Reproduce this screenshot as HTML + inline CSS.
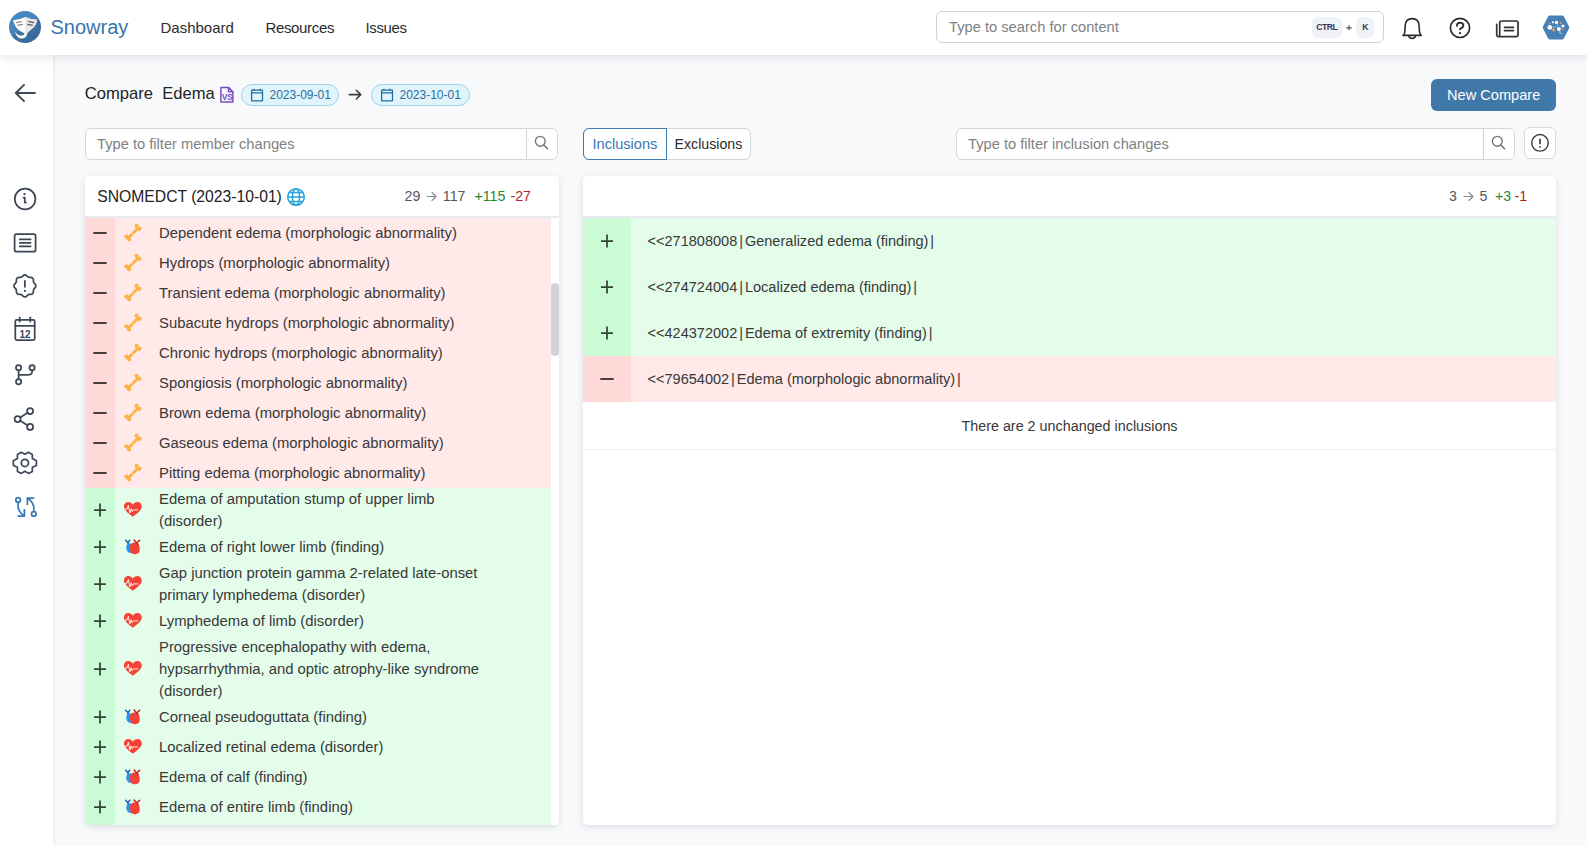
<!DOCTYPE html>
<html><head><meta charset="utf-8">
<style>
*{box-sizing:border-box;margin:0;padding:0}
html,body{width:1587px;height:846px;overflow:hidden}
body{background:#f8f9fb;font-family:"Liberation Sans",sans-serif;color:#333;position:relative}
.a{position:absolute;white-space:nowrap}
#hdr{position:absolute;left:0;top:0;width:1587px;height:55px;background:#fff;box-shadow:0 2px 9px rgba(30,40,60,.12);z-index:5}
#side{position:absolute;left:0;top:55px;width:53px;height:791px;background:#fff;box-shadow:1px 0 5px rgba(30,40,60,.07);z-index:4}
.nav{font-size:15px;color:#2b2b2b;line-height:15px;top:20px}
.card{position:absolute;background:#fff;border-radius:5px;box-shadow:0 2px 7px rgba(30,40,60,.13)}
.inp{position:absolute;background:#fff;border:1px solid #d5d6d8;border-radius:6px}
.ph{color:#7f8183;font-size:14.7px;line-height:15px}
svg{position:absolute;overflow:visible}
.ic{fill:none;stroke:#3d4756;stroke-width:1.75;stroke-linecap:round;stroke-linejoin:round}
.badge{position:absolute;top:84px;height:22px;border:1px solid #9ed3ea;background:#e2f4fb;border-radius:11px}
.bt{position:absolute;font-size:12px;line-height:12px;color:#2a6e9c;top:3.6px}
.row{position:absolute;left:0;width:466px;}
.rr{background:#ffe9e9}.rg{background:#e4fdea}
.cell{position:absolute;left:0;top:0;width:30px;height:100%}
.rr .cell{background:#ffd8d8}.rg .cell{background:#cbfcd5}
.txt{position:absolute;left:74px;font-size:14.85px;line-height:22px;color:#383838}
.cnt{position:absolute;top:13.1px;font-size:14.2px;line-height:14.2px;color:#555;white-space:nowrap}
.arr{fill:none;stroke:#8a8a8a;stroke-width:1.15;stroke-linecap:round;stroke-linejoin:round}
</style></head><body>

<!-- HEADER -->
<div id="hdr">
  <svg style="left:9px;top:11px" width="32" height="32" viewBox="0 0 32 32">
    <defs><linearGradient id="lg" x1="0.2" y1="0.1" x2="0.8" y2="0.9"><stop offset="0" stop-color="#4788c0"/><stop offset="0.45" stop-color="#4584ba"/><stop offset="0.55" stop-color="#3c71a0"/><stop offset="1" stop-color="#3a6b98"/></linearGradient></defs>
    <circle cx="16" cy="16" r="16" fill="url(#lg)"/>
    <path d="M4 9.3 Q10.5 9.0 16.3 6.1 Q22 8.8 28.2 8.8 Q27.2 15.2 21.5 19 Q18.5 21 17.9 23.2 Q17.5 27.4 12 27.5 Q8 27.2 6 21 Q8.8 24.6 12.2 24.8 Q15 24.8 15.6 22.3 Q9.2 19.8 6.6 15.5 Q4.8 12.5 4 9.3Z" fill="#fff"/>
    <path d="M16.3 6.1 Q22 8.8 28.2 8.8 Q27.2 15.2 21.5 19 Q18.5 21 17.9 23.2 Q17.8 25.3 16.3 26.3Z" fill="#e6e6e6"/>
    <path d="M6.9 11.6 L12.9 10.55 M8.4 14.4 L14 13.3" stroke="#8c8c8c" stroke-width="1.25" fill="none"/>
    <path d="M19.3 10.3 L25 11.6 M18.2 13.3 L23.7 14.4" stroke="#5e5e5e" stroke-width="1.25" fill="none"/>
  </svg>
  <div class="a" style="left:50.5px;top:16.5px;font-size:20px;line-height:20px;color:#3874ac">Snowray</div>
  <div class="a nav" style="left:160.5px">Dashboard</div>
  <div class="a nav" style="left:265.5px;letter-spacing:-.35px">Resources</div>
  <div class="a nav" style="left:365.5px;letter-spacing:-.35px">Issues</div>

  <div class="inp" style="left:936px;top:11px;width:448px;height:32px;border-color:#cfd3d9"></div>
  <div class="a ph" style="left:949px;top:19.6px">Type to search for content</div>
  <div class="a" style="left:1312px;top:17px;width:30px;height:20px;background:#eff2f6;border-radius:6px;box-shadow:0 1px 1px rgba(0,0,0,.06)"></div>
  <div class="a" style="left:1316.2px;top:21.65px;font-size:8.7px;line-height:10px;font-weight:bold;color:#3b3552;letter-spacing:-.55px">CTRL</div>
  <svg style="left:1346.2px;top:24.8px" width="6" height="6" viewBox="0 0 6 6"><path d="M3 0.2 V5.2 M0.1 2.9 H5.9" stroke="#3a3a3a" stroke-width="1"/></svg>
  <div class="a" style="left:1356px;top:17px;width:18px;height:20px;background:#eff2f6;border-radius:6px;box-shadow:0 1px 1px rgba(0,0,0,.06)"></div>
  <div class="a" style="left:1362.2px;top:21.65px;font-size:8.7px;line-height:10px;font-weight:bold;color:#3b3552">K</div>

  <!-- bell -->
  <svg style="left:1400px;top:15.8px" width="24" height="25" viewBox="0 0 24 25">
    <path d="M4.8 16 L5.2 9.5 Q5.6 2.6 12.15 2.6 Q18.7 2.6 19.1 9.5 L19.5 16 Q19.8 18.3 21.3 19.4 H3 Q4.5 18.3 4.8 16 Z" fill="none" stroke="#2b2b2b" stroke-width="1.6" stroke-linejoin="round"/>
    <path d="M8.7 19.7 Q9.1 22.5 12.15 22.5 Q15.2 22.5 15.6 19.7" fill="none" stroke="#2b2b2b" stroke-width="1.5"/>
  </svg>
  <!-- help -->
  <svg style="left:1448px;top:16px" width="24" height="24" viewBox="0 0 24 24">
    <circle cx="12" cy="11.9" r="9.6" fill="none" stroke="#2b2b2b" stroke-width="1.7"/>
    <path d="M8.8 9.9 Q8.9 6.7 12 6.6 Q15.3 6.6 15.4 9.3 Q15.4 11.5 12.8 12.3 Q12 12.6 12 13.4" fill="none" stroke="#2b2b2b" stroke-width="1.75" stroke-linecap="round"/>
    <circle cx="12" cy="17.2" r="1.1" fill="#2b2b2b"/>
  </svg>
  <!-- news -->
  <svg style="left:1494px;top:17.9px" width="27" height="22" viewBox="0 0 27 22">
    <path d="M2.7 6.3 V16.3 Q2.7 18.6 4.5 18.6 H22.2 Q24 18.6 24 16.8 V4.8 Q24 3 22.2 3 H7.5 Q5.7 3 5.7 4.8 V17" fill="none" stroke="#333" stroke-width="1.7" stroke-linecap="round"/>
    <path d="M10.5 9.3 H19.5 M10.5 12.6 H19.5" stroke="#333" stroke-width="1.7" stroke-linecap="round"/>
  </svg>
  <!-- avatar -->
  <svg style="left:1542px;top:14.5px" width="28" height="25" viewBox="0 0 28 25">
    <path d="M7.6 0.5 H20.4 Q21.3 0.5 21.8 1.3 L27 11.5 Q27.5 12.45 27 13.4 L21.8 23.6 Q21.3 24.4 20.4 24.4 H7.6 Q6.7 24.4 6.2 23.6 L1 13.4 Q0.5 12.45 1 11.5 L6.2 1.3 Q6.7 0.5 7.6 0.5Z" fill="#4680b5"/>
    <g fill="#fff">
    <circle cx="7.85" cy="12.4" r="2.3"/><circle cx="10.86" cy="7.35" r="1.05"/><circle cx="14.47" cy="7.4" r="1.7"/>
    <circle cx="20.9" cy="11" r="1.6"/><circle cx="16.9" cy="14" r="2.0"/><circle cx="17.9" cy="17" r="0.75"/><circle cx="19.2" cy="18.6" r="0.6"/>
    <circle cx="11.3" cy="12" r="0.6"/><circle cx="15.6" cy="10.4" r="0.5"/></g>
    <g fill="#f4a04e">
    <circle cx="11.66" cy="15" r="1.45"/><circle cx="7.85" cy="8.55" r="0.8"/><circle cx="18.7" cy="7.95" r="0.95"/>
    <circle cx="13.67" cy="11.8" r="0.8"/><circle cx="20.7" cy="14.2" r="0.8"/></g>
  </svg>
</div>

<!-- SIDEBAR -->
<div id="side"></div>
<svg style="left:0;top:0;z-index:6" width="53" height="846" viewBox="0 0 53 846">
  <g class="ic">
    <!-- back arrow -->
    <path d="M15.8 93 H35 M15.8 93 L24 84.8 M15.8 93 L24 101.2" stroke-width="1.9"/>
    <!-- info -->
    <circle cx="25.1" cy="199" r="10.3"/>
    <path d="M24.4 194.1 h.1" stroke-width="2.2"/>
    <path d="M23.5 197.5 h1.3 v5 h1.1"/>
    <!-- article -->
    <rect x="14.6" y="234.2" width="21" height="17.5" rx="2"/>
    <path d="M19.7 239.4 H30.7 M19.7 242.9 H30.7 M19.7 246.4 H30.7" stroke-width="1.6"/>
    <!-- rosette alert -->
    <g transform="translate(24.89 285.9) scale(1.215) translate(-12 -12)" stroke-width="1.45"><path d="M5 7.2a2.2 2.2 0 0 1 2.2 -2.2h1a2.2 2.2 0 0 0 1.55 -.64l.7 -.7a2.2 2.2 0 0 1 3.12 0l.7 .7c.412 .41 .97 .64 1.55 .64h1a2.2 2.2 0 0 1 2.2 2.2v1c0 .58 .23 1.138 .64 1.55l.7 .7a2.2 2.2 0 0 1 0 3.12l-.7 .7a2.2 2.2 0 0 0 -.64 1.55v1a2.2 2.2 0 0 1 -2.2 2.2h-1a2.2 2.2 0 0 0 -1.55 .64l-.7 .7a2.2 2.2 0 0 1 -3.12 0l-.7 -.7a2.2 2.2 0 0 0 -1.55 -.64h-1a2.2 2.2 0 0 1 -2.2 -2.2v-1a2.2 2.2 0 0 0 -.64 -1.55l-.7 -.7a2.2 2.2 0 0 1 0 -3.12l.7 -.7a2.2 2.2 0 0 0 .64 -1.55v-1"/></g>
    <path d="M24.89 281 V286.8" stroke-width="1.8"/>
    <path d="M24.89 290.8 v.1" stroke-width="2.1"/>
    <!-- calendar -->
    <rect x="15.3" y="319.8" width="19.4" height="20.4" rx="1.6"/>
    <path d="M15.3 325.9 H34.7 M19.7 317.3 V321.5 M30.3 317.3 V321.5"/>
    <!-- git branch -->
    <circle cx="18.6" cy="367.8" r="2.6"/><circle cx="32.1" cy="367.8" r="2.6"/><circle cx="18.6" cy="381.8" r="2.6"/>
    <path d="M18.6 370.4 V379.2 M18.6 374.8 H28.6 Q32.1 374.8 32.1 371.3 V370.4"/>
    <!-- share -->
    <circle cx="17.6" cy="419.1" r="3"/><circle cx="30.1" cy="411.1" r="3"/><circle cx="30.1" cy="426.9" r="3"/>
    <path d="M20.2 417.4 L27.5 412.8 M20.2 420.8 L27.5 425.2"/>
    <!-- settings gear -->
    <path d="M21.35 452.3 L24.89 454.2 L28.44 452.3 L32.34 454.6 L32.34 458.6 L36.42 460.8 L36.42 465.4 L32.34 467.3 L32.34 471.4 L28.44 473.4 L24.89 471.2 L21.35 473.4 L17.45 471.4 L17.45 467.3 L13.37 465.4 L13.37 460.8 L17.45 458.6 L17.45 454.6 Z" stroke-width="1.7"/>
    <circle cx="24.89" cy="462.9" r="3.6"/>
  </g>
  <g class="ic" style="stroke:#3a7ab6">
    <circle cx="18.1" cy="500" r="2.3"/>
    <path d="M18.1 502.3 V506.5 Q18.1 511.5 24.2 515.9"/>
    <path d="M18.2 516 H24.4 V509.9"/>
    <circle cx="33.8" cy="513.9" r="2.3"/>
    <path d="M33.8 511.6 V507.5 Q33.8 502.5 27.6 498.2"/>
    <path d="M33.6 498.1 H27.4 V504.2"/>
  </g>
  <text x="25" y="337.6" text-anchor="middle" font-family="Liberation Sans" font-weight="bold" font-size="10" fill="#3d4756">12</text>
</svg>

<!-- MAIN TITLE -->
<div class="a" style="left:84.8px;top:86.4px;font-size:16.6px;line-height:16.6px;color:#232323">Compare&nbsp; Edema</div>
<svg style="left:219px;top:86px" width="16" height="18" viewBox="0 0 16 18">
  <path d="M1.9 1.4 H9.5 L13.9 5.8 V16 H1.9 Z M9.5 1.4 V5.8 H13.9" fill="none" stroke="#7c4cc6" stroke-width="1.5" stroke-linejoin="round"/>
  <text x="7.9" y="14" text-anchor="middle" font-family="Liberation Sans" font-weight="bold" font-size="8.6" letter-spacing="-0.6" fill="#7c4cc6">VS</text>
</svg>
<div class="badge" style="left:241px;width:98px">
  <svg style="left:9px;top:3.5px" width="13" height="13" viewBox="0 0 13 13"><rect x="0.6" y="1.1" width="10.9" height="10.7" rx="0.3" fill="none" stroke="#1d6ea3" stroke-width="1.25"/><path d="M0.6 3.8 H11.5 M2.9 -0.2 V1.8 M9.1 -0.2 V1.8" stroke="#1d6ea3" stroke-width="1.25"/></svg>
  <div class="bt" style="left:27.5px">2023-09-01</div>
</div>
<svg style="left:347px;top:87px" width="16" height="14" viewBox="0 0 16 14"><path d="M2.3 7.6 H13.6 M9.3 3.2 L13.7 7.6 L9.3 12" fill="none" stroke="#3a3a3a" stroke-width="1.55" stroke-linecap="round" stroke-linejoin="round"/></svg>
<div class="badge" style="left:371px;width:99px">
  <svg style="left:9px;top:3.5px" width="13" height="13" viewBox="0 0 13 13"><rect x="0.6" y="1.1" width="10.9" height="10.7" rx="0.3" fill="none" stroke="#1d6ea3" stroke-width="1.25"/><path d="M0.6 3.8 H11.5 M2.9 -0.2 V1.8 M9.1 -0.2 V1.8" stroke="#1d6ea3" stroke-width="1.25"/></svg>
  <div class="bt" style="left:27.5px">2023-10-01</div>
</div>

<div class="a" style="left:1431px;top:79px;width:125px;height:32px;background:#4178aa;border-radius:6px"></div>
<div class="a" style="left:1447px;top:87.5px;font-size:14.6px;line-height:14.6px;color:#fff">New Compare</div>

<!-- LEFT FILTER -->
<div class="inp" style="left:85px;top:128px;width:473px;height:32px"></div>
<div class="a" style="left:526px;top:129px;width:1px;height:30px;background:#d3d5d8"></div>
<div class="a ph" style="left:97px;top:137.2px">Type to filter member changes</div>
<svg style="left:533px;top:134px" width="16" height="16" viewBox="0 0 16 16"><circle cx="7.3" cy="7.3" r="4.9" fill="none" stroke="#737373" stroke-width="1.35"/><path d="M10.8 10.9 L14.6 14.8" stroke="#737373" stroke-width="1.45" stroke-linecap="round"/></svg>

<!-- TABS -->
<div class="a" style="left:583px;top:128px;width:168px;height:32px;background:#fff;border:1px solid #d5d6d8;border-radius:6px"></div>
<div class="a" style="left:583px;top:128px;width:84px;height:32px;border:1.5px solid #3f79ad;border-radius:6px 0 0 6px"></div>
<div class="a" style="left:592.5px;top:136.7px;font-size:14.6px;line-height:14.6px;color:#3a78b0">Inclusions</div>
<div class="a" style="left:674.5px;top:136.7px;font-size:14.2px;line-height:14.6px;color:#2b2b2b">Exclusions</div>

<!-- RIGHT FILTER -->
<div class="inp" style="left:956px;top:128px;width:559px;height:32px"></div>
<div class="a" style="left:1483px;top:129px;width:1px;height:30px;background:#d3d5d8"></div>
<div class="a ph" style="left:968px;top:137.2px">Type to filter inclusion changes</div>
<svg style="left:1490px;top:134px" width="16" height="16" viewBox="0 0 16 16"><circle cx="7.3" cy="7.3" r="4.9" fill="none" stroke="#737373" stroke-width="1.35"/><path d="M10.8 10.9 L14.6 14.8" stroke="#737373" stroke-width="1.45" stroke-linecap="round"/></svg>
<div class="inp" style="left:1524px;top:127px;width:32px;height:32px;border-color:#d6d9de"></div>
<svg style="left:1530px;top:133px" width="20" height="20" viewBox="0 0 20 20"><circle cx="10" cy="9.8" r="8.3" fill="none" stroke="#404040" stroke-width="1.45"/><path d="M10 6.3 V10.4" stroke="#404040" stroke-width="1.7" stroke-linecap="round"/><circle cx="10" cy="13.9" r="0.95" fill="#404040"/></svg>

<!-- LEFT CARD -->
<div class="card" style="left:85px;top:176px;width:474px;height:649px;overflow:hidden">
  <div class="a" style="left:12.3px;top:12.6px;font-size:15.7px;line-height:15.7px;color:#222">SNOMEDCT (2023-10-01)</div>
  <svg style="left:201px;top:11px" width="20" height="20" viewBox="0 0 20 20"><g fill="none" stroke="#27a3dc" stroke-width="1.5"><circle cx="10" cy="10" r="8.3"/><ellipse cx="10" cy="10" rx="3.6" ry="8.3"/><path d="M1.7 10 H18.3 M3 5.6 H17 M3 14.4 H17"/></g></svg>
  <div class="cnt" style="left:319.5px">29</div><svg style="left:341px;top:14.5px" width="11" height="11" viewBox="0 0 11 11"><path d="M1 5.5 H10 M6 1.5 L10 5.5 L6 9.5" class="arr"/></svg><div class="cnt" style="left:357.8px">117</div><div class="cnt" style="left:389.5px;color:#23882b">+115</div><div class="cnt" style="left:425.5px;color:#b0241c">-27</div>
  <div class="a" style="left:0;top:40px;width:474px;height:2px;background:#e8eaee"></div>
  <div id="list" class="a" style="left:0;top:42px;width:466px;height:607px;overflow:hidden">
<div class="row rr" style="top:0px;height:30px"><div class="cell"></div><svg style="left:8px;top:13.0px" width="14" height="4" viewBox="0 0 14 4"><path d="M1 2 H13" stroke="#4a4040" stroke-width="1.8" stroke-linecap="round"/></svg><svg style="left:38px;top:5.0px" width="20" height="20" viewBox="0 0 20 20"><g fill="#ffb245"><path d="M3.9 14.2 L14.2 3.9 L16.3 6 L6 16.3Z"/><circle cx="3.4" cy="13.6" r="2.15"/><circle cx="6.05" cy="16.3" r="2.15"/><circle cx="13.6" cy="2.9" r="2.15"/><circle cx="16.45" cy="5.85" r="2.15"/></g><path d="M8.6 9.4 L10.9 11.7" stroke="#ffe9e9" stroke-width="0.6"/></svg><div class="txt" style="top:4px">Dependent edema (morphologic abnormality)</div></div>
<div class="row rr" style="top:30px;height:30px"><div class="cell"></div><svg style="left:8px;top:13.0px" width="14" height="4" viewBox="0 0 14 4"><path d="M1 2 H13" stroke="#4a4040" stroke-width="1.8" stroke-linecap="round"/></svg><svg style="left:38px;top:5.0px" width="20" height="20" viewBox="0 0 20 20"><g fill="#ffb245"><path d="M3.9 14.2 L14.2 3.9 L16.3 6 L6 16.3Z"/><circle cx="3.4" cy="13.6" r="2.15"/><circle cx="6.05" cy="16.3" r="2.15"/><circle cx="13.6" cy="2.9" r="2.15"/><circle cx="16.45" cy="5.85" r="2.15"/></g><path d="M8.6 9.4 L10.9 11.7" stroke="#ffe9e9" stroke-width="0.6"/></svg><div class="txt" style="top:4px">Hydrops (morphologic abnormality)</div></div>
<div class="row rr" style="top:60px;height:30px"><div class="cell"></div><svg style="left:8px;top:13.0px" width="14" height="4" viewBox="0 0 14 4"><path d="M1 2 H13" stroke="#4a4040" stroke-width="1.8" stroke-linecap="round"/></svg><svg style="left:38px;top:5.0px" width="20" height="20" viewBox="0 0 20 20"><g fill="#ffb245"><path d="M3.9 14.2 L14.2 3.9 L16.3 6 L6 16.3Z"/><circle cx="3.4" cy="13.6" r="2.15"/><circle cx="6.05" cy="16.3" r="2.15"/><circle cx="13.6" cy="2.9" r="2.15"/><circle cx="16.45" cy="5.85" r="2.15"/></g><path d="M8.6 9.4 L10.9 11.7" stroke="#ffe9e9" stroke-width="0.6"/></svg><div class="txt" style="top:4px">Transient edema (morphologic abnormality)</div></div>
<div class="row rr" style="top:90px;height:30px"><div class="cell"></div><svg style="left:8px;top:13.0px" width="14" height="4" viewBox="0 0 14 4"><path d="M1 2 H13" stroke="#4a4040" stroke-width="1.8" stroke-linecap="round"/></svg><svg style="left:38px;top:5.0px" width="20" height="20" viewBox="0 0 20 20"><g fill="#ffb245"><path d="M3.9 14.2 L14.2 3.9 L16.3 6 L6 16.3Z"/><circle cx="3.4" cy="13.6" r="2.15"/><circle cx="6.05" cy="16.3" r="2.15"/><circle cx="13.6" cy="2.9" r="2.15"/><circle cx="16.45" cy="5.85" r="2.15"/></g><path d="M8.6 9.4 L10.9 11.7" stroke="#ffe9e9" stroke-width="0.6"/></svg><div class="txt" style="top:4px">Subacute hydrops (morphologic abnormality)</div></div>
<div class="row rr" style="top:120px;height:30px"><div class="cell"></div><svg style="left:8px;top:13.0px" width="14" height="4" viewBox="0 0 14 4"><path d="M1 2 H13" stroke="#4a4040" stroke-width="1.8" stroke-linecap="round"/></svg><svg style="left:38px;top:5.0px" width="20" height="20" viewBox="0 0 20 20"><g fill="#ffb245"><path d="M3.9 14.2 L14.2 3.9 L16.3 6 L6 16.3Z"/><circle cx="3.4" cy="13.6" r="2.15"/><circle cx="6.05" cy="16.3" r="2.15"/><circle cx="13.6" cy="2.9" r="2.15"/><circle cx="16.45" cy="5.85" r="2.15"/></g><path d="M8.6 9.4 L10.9 11.7" stroke="#ffe9e9" stroke-width="0.6"/></svg><div class="txt" style="top:4px">Chronic hydrops (morphologic abnormality)</div></div>
<div class="row rr" style="top:150px;height:30px"><div class="cell"></div><svg style="left:8px;top:13.0px" width="14" height="4" viewBox="0 0 14 4"><path d="M1 2 H13" stroke="#4a4040" stroke-width="1.8" stroke-linecap="round"/></svg><svg style="left:38px;top:5.0px" width="20" height="20" viewBox="0 0 20 20"><g fill="#ffb245"><path d="M3.9 14.2 L14.2 3.9 L16.3 6 L6 16.3Z"/><circle cx="3.4" cy="13.6" r="2.15"/><circle cx="6.05" cy="16.3" r="2.15"/><circle cx="13.6" cy="2.9" r="2.15"/><circle cx="16.45" cy="5.85" r="2.15"/></g><path d="M8.6 9.4 L10.9 11.7" stroke="#ffe9e9" stroke-width="0.6"/></svg><div class="txt" style="top:4px">Spongiosis (morphologic abnormality)</div></div>
<div class="row rr" style="top:180px;height:30px"><div class="cell"></div><svg style="left:8px;top:13.0px" width="14" height="4" viewBox="0 0 14 4"><path d="M1 2 H13" stroke="#4a4040" stroke-width="1.8" stroke-linecap="round"/></svg><svg style="left:38px;top:5.0px" width="20" height="20" viewBox="0 0 20 20"><g fill="#ffb245"><path d="M3.9 14.2 L14.2 3.9 L16.3 6 L6 16.3Z"/><circle cx="3.4" cy="13.6" r="2.15"/><circle cx="6.05" cy="16.3" r="2.15"/><circle cx="13.6" cy="2.9" r="2.15"/><circle cx="16.45" cy="5.85" r="2.15"/></g><path d="M8.6 9.4 L10.9 11.7" stroke="#ffe9e9" stroke-width="0.6"/></svg><div class="txt" style="top:4px">Brown edema (morphologic abnormality)</div></div>
<div class="row rr" style="top:210px;height:30px"><div class="cell"></div><svg style="left:8px;top:13.0px" width="14" height="4" viewBox="0 0 14 4"><path d="M1 2 H13" stroke="#4a4040" stroke-width="1.8" stroke-linecap="round"/></svg><svg style="left:38px;top:5.0px" width="20" height="20" viewBox="0 0 20 20"><g fill="#ffb245"><path d="M3.9 14.2 L14.2 3.9 L16.3 6 L6 16.3Z"/><circle cx="3.4" cy="13.6" r="2.15"/><circle cx="6.05" cy="16.3" r="2.15"/><circle cx="13.6" cy="2.9" r="2.15"/><circle cx="16.45" cy="5.85" r="2.15"/></g><path d="M8.6 9.4 L10.9 11.7" stroke="#ffe9e9" stroke-width="0.6"/></svg><div class="txt" style="top:4px">Gaseous edema (morphologic abnormality)</div></div>
<div class="row rr" style="top:240px;height:30px"><div class="cell"></div><svg style="left:8px;top:13.0px" width="14" height="4" viewBox="0 0 14 4"><path d="M1 2 H13" stroke="#4a4040" stroke-width="1.8" stroke-linecap="round"/></svg><svg style="left:38px;top:5.0px" width="20" height="20" viewBox="0 0 20 20"><g fill="#ffb245"><path d="M3.9 14.2 L14.2 3.9 L16.3 6 L6 16.3Z"/><circle cx="3.4" cy="13.6" r="2.15"/><circle cx="6.05" cy="16.3" r="2.15"/><circle cx="13.6" cy="2.9" r="2.15"/><circle cx="16.45" cy="5.85" r="2.15"/></g><path d="M8.6 9.4 L10.9 11.7" stroke="#ffe9e9" stroke-width="0.6"/></svg><div class="txt" style="top:4px">Pitting edema (morphologic abnormality)</div></div>
<div class="row rg" style="top:270px;height:44px"><div class="cell"></div><svg style="left:8px;top:15.0px" width="14" height="14" viewBox="0 0 14 14"><path d="M7 0.4 V13.6 M1 7 H13" stroke="#36433a" stroke-width="1.75"/></svg><svg style="left:38px;top:14.0px" width="20" height="17" viewBox="0 0 20 17"><path d="M9.85 14.8 C7 12.5 0.9 8.5 0.9 4.6 C0.9 2 2.8 0.1 5.2 0.1 C7.2 0.1 8.8 1.2 9.85 2.8 C10.9 1.2 12.5 0.1 14.5 0.1 C16.9 0.1 18.8 2 18.8 4.6 C18.8 8.5 12.7 12.5 9.85 14.8Z" fill="#f44336"/><path d="M2.3 7.2 H4 L5.4 3.4 L6.8 11 L8.2 6.8 L9.2 9.7 L10.2 7.9 H14.7" fill="none" stroke="#fff" stroke-width="0.9" stroke-linejoin="round" stroke-linecap="round"/></svg><div class="txt" style="top:0px">Edema of amputation stump of upper limb<br>(disorder)</div></div>
<div class="row rg" style="top:314px;height:30px"><div class="cell"></div><svg style="left:8px;top:8.0px" width="14" height="14" viewBox="0 0 14 14"><path d="M7 0.4 V13.6 M1 7 H13" stroke="#36433a" stroke-width="1.75"/></svg><svg style="left:38px;top:6.0px" width="18" height="18" viewBox="0 0 18 18"><path d="M5.2 5.2 Q3.2 6.5 3.2 9.5 Q3.3 13.5 6.8 15 L8.5 15 L8.8 6 Q7 5 5.2 5.2Z" fill="#2196f3"/><path d="M2.6 2.3 L4.9 4.6 L6.8 2.2 M4.9 4.6 L5.1 5.8" fill="none" stroke="#1565c0" stroke-width="1.5" stroke-linecap="round"/><path d="M8.8 5.2 Q10 4.3 11.6 4.4 Q14.5 4.6 15.9 7 Q17 9 16.8 12 Q16.6 15.8 12.5 16.3 Q9.3 16.4 8 14.4 Q6.7 12.4 6.8 9.8 Q6.9 6.6 8.8 5.2Z" fill="#f44336"/><path d="M11.1 2.1 L13.2 4.6 M16.6 2.4 L13.6 5 L15 6.4" fill="none" stroke="#c62828" stroke-width="1.6" stroke-linecap="round" stroke-linejoin="round"/><path d="M9.6 6.2 Q11.5 8.5 13.5 8.8" fill="none" stroke="#d83a30" stroke-width="0.6"/></svg><div class="txt" style="top:4px">Edema of right lower limb (finding)</div></div>
<div class="row rg" style="top:344px;height:44px"><div class="cell"></div><svg style="left:8px;top:15.0px" width="14" height="14" viewBox="0 0 14 14"><path d="M7 0.4 V13.6 M1 7 H13" stroke="#36433a" stroke-width="1.75"/></svg><svg style="left:38px;top:14.0px" width="20" height="17" viewBox="0 0 20 17"><path d="M9.85 14.8 C7 12.5 0.9 8.5 0.9 4.6 C0.9 2 2.8 0.1 5.2 0.1 C7.2 0.1 8.8 1.2 9.85 2.8 C10.9 1.2 12.5 0.1 14.5 0.1 C16.9 0.1 18.8 2 18.8 4.6 C18.8 8.5 12.7 12.5 9.85 14.8Z" fill="#f44336"/><path d="M2.3 7.2 H4 L5.4 3.4 L6.8 11 L8.2 6.8 L9.2 9.7 L10.2 7.9 H14.7" fill="none" stroke="#fff" stroke-width="0.9" stroke-linejoin="round" stroke-linecap="round"/></svg><div class="txt" style="top:0px">Gap junction protein gamma 2-related late-onset<br>primary lymphedema (disorder)</div></div>
<div class="row rg" style="top:388px;height:30px"><div class="cell"></div><svg style="left:8px;top:8.0px" width="14" height="14" viewBox="0 0 14 14"><path d="M7 0.4 V13.6 M1 7 H13" stroke="#36433a" stroke-width="1.75"/></svg><svg style="left:38px;top:7.0px" width="20" height="17" viewBox="0 0 20 17"><path d="M9.85 14.8 C7 12.5 0.9 8.5 0.9 4.6 C0.9 2 2.8 0.1 5.2 0.1 C7.2 0.1 8.8 1.2 9.85 2.8 C10.9 1.2 12.5 0.1 14.5 0.1 C16.9 0.1 18.8 2 18.8 4.6 C18.8 8.5 12.7 12.5 9.85 14.8Z" fill="#f44336"/><path d="M2.3 7.2 H4 L5.4 3.4 L6.8 11 L8.2 6.8 L9.2 9.7 L10.2 7.9 H14.7" fill="none" stroke="#fff" stroke-width="0.9" stroke-linejoin="round" stroke-linecap="round"/></svg><div class="txt" style="top:4px">Lymphedema of limb (disorder)</div></div>
<div class="row rg" style="top:418px;height:66px"><div class="cell"></div><svg style="left:8px;top:26.0px" width="14" height="14" viewBox="0 0 14 14"><path d="M7 0.4 V13.6 M1 7 H13" stroke="#36433a" stroke-width="1.75"/></svg><svg style="left:38px;top:25.0px" width="20" height="17" viewBox="0 0 20 17"><path d="M9.85 14.8 C7 12.5 0.9 8.5 0.9 4.6 C0.9 2 2.8 0.1 5.2 0.1 C7.2 0.1 8.8 1.2 9.85 2.8 C10.9 1.2 12.5 0.1 14.5 0.1 C16.9 0.1 18.8 2 18.8 4.6 C18.8 8.5 12.7 12.5 9.85 14.8Z" fill="#f44336"/><path d="M2.3 7.2 H4 L5.4 3.4 L6.8 11 L8.2 6.8 L9.2 9.7 L10.2 7.9 H14.7" fill="none" stroke="#fff" stroke-width="0.9" stroke-linejoin="round" stroke-linecap="round"/></svg><div class="txt" style="top:0px">Progressive encephalopathy with edema,<br>hypsarrhythmia, and optic atrophy-like syndrome<br>(disorder)</div></div>
<div class="row rg" style="top:484px;height:30px"><div class="cell"></div><svg style="left:8px;top:8.0px" width="14" height="14" viewBox="0 0 14 14"><path d="M7 0.4 V13.6 M1 7 H13" stroke="#36433a" stroke-width="1.75"/></svg><svg style="left:38px;top:6.0px" width="18" height="18" viewBox="0 0 18 18"><path d="M5.2 5.2 Q3.2 6.5 3.2 9.5 Q3.3 13.5 6.8 15 L8.5 15 L8.8 6 Q7 5 5.2 5.2Z" fill="#2196f3"/><path d="M2.6 2.3 L4.9 4.6 L6.8 2.2 M4.9 4.6 L5.1 5.8" fill="none" stroke="#1565c0" stroke-width="1.5" stroke-linecap="round"/><path d="M8.8 5.2 Q10 4.3 11.6 4.4 Q14.5 4.6 15.9 7 Q17 9 16.8 12 Q16.6 15.8 12.5 16.3 Q9.3 16.4 8 14.4 Q6.7 12.4 6.8 9.8 Q6.9 6.6 8.8 5.2Z" fill="#f44336"/><path d="M11.1 2.1 L13.2 4.6 M16.6 2.4 L13.6 5 L15 6.4" fill="none" stroke="#c62828" stroke-width="1.6" stroke-linecap="round" stroke-linejoin="round"/><path d="M9.6 6.2 Q11.5 8.5 13.5 8.8" fill="none" stroke="#d83a30" stroke-width="0.6"/></svg><div class="txt" style="top:4px">Corneal pseudoguttata (finding)</div></div>
<div class="row rg" style="top:514px;height:30px"><div class="cell"></div><svg style="left:8px;top:8.0px" width="14" height="14" viewBox="0 0 14 14"><path d="M7 0.4 V13.6 M1 7 H13" stroke="#36433a" stroke-width="1.75"/></svg><svg style="left:38px;top:7.0px" width="20" height="17" viewBox="0 0 20 17"><path d="M9.85 14.8 C7 12.5 0.9 8.5 0.9 4.6 C0.9 2 2.8 0.1 5.2 0.1 C7.2 0.1 8.8 1.2 9.85 2.8 C10.9 1.2 12.5 0.1 14.5 0.1 C16.9 0.1 18.8 2 18.8 4.6 C18.8 8.5 12.7 12.5 9.85 14.8Z" fill="#f44336"/><path d="M2.3 7.2 H4 L5.4 3.4 L6.8 11 L8.2 6.8 L9.2 9.7 L10.2 7.9 H14.7" fill="none" stroke="#fff" stroke-width="0.9" stroke-linejoin="round" stroke-linecap="round"/></svg><div class="txt" style="top:4px">Localized retinal edema (disorder)</div></div>
<div class="row rg" style="top:544px;height:30px"><div class="cell"></div><svg style="left:8px;top:8.0px" width="14" height="14" viewBox="0 0 14 14"><path d="M7 0.4 V13.6 M1 7 H13" stroke="#36433a" stroke-width="1.75"/></svg><svg style="left:38px;top:6.0px" width="18" height="18" viewBox="0 0 18 18"><path d="M5.2 5.2 Q3.2 6.5 3.2 9.5 Q3.3 13.5 6.8 15 L8.5 15 L8.8 6 Q7 5 5.2 5.2Z" fill="#2196f3"/><path d="M2.6 2.3 L4.9 4.6 L6.8 2.2 M4.9 4.6 L5.1 5.8" fill="none" stroke="#1565c0" stroke-width="1.5" stroke-linecap="round"/><path d="M8.8 5.2 Q10 4.3 11.6 4.4 Q14.5 4.6 15.9 7 Q17 9 16.8 12 Q16.6 15.8 12.5 16.3 Q9.3 16.4 8 14.4 Q6.7 12.4 6.8 9.8 Q6.9 6.6 8.8 5.2Z" fill="#f44336"/><path d="M11.1 2.1 L13.2 4.6 M16.6 2.4 L13.6 5 L15 6.4" fill="none" stroke="#c62828" stroke-width="1.6" stroke-linecap="round" stroke-linejoin="round"/><path d="M9.6 6.2 Q11.5 8.5 13.5 8.8" fill="none" stroke="#d83a30" stroke-width="0.6"/></svg><div class="txt" style="top:4px">Edema of calf (finding)</div></div>
<div class="row rg" style="top:574px;height:30px"><div class="cell"></div><svg style="left:8px;top:8.0px" width="14" height="14" viewBox="0 0 14 14"><path d="M7 0.4 V13.6 M1 7 H13" stroke="#36433a" stroke-width="1.75"/></svg><svg style="left:38px;top:6.0px" width="18" height="18" viewBox="0 0 18 18"><path d="M5.2 5.2 Q3.2 6.5 3.2 9.5 Q3.3 13.5 6.8 15 L8.5 15 L8.8 6 Q7 5 5.2 5.2Z" fill="#2196f3"/><path d="M2.6 2.3 L4.9 4.6 L6.8 2.2 M4.9 4.6 L5.1 5.8" fill="none" stroke="#1565c0" stroke-width="1.5" stroke-linecap="round"/><path d="M8.8 5.2 Q10 4.3 11.6 4.4 Q14.5 4.6 15.9 7 Q17 9 16.8 12 Q16.6 15.8 12.5 16.3 Q9.3 16.4 8 14.4 Q6.7 12.4 6.8 9.8 Q6.9 6.6 8.8 5.2Z" fill="#f44336"/><path d="M11.1 2.1 L13.2 4.6 M16.6 2.4 L13.6 5 L15 6.4" fill="none" stroke="#c62828" stroke-width="1.6" stroke-linecap="round" stroke-linejoin="round"/><path d="M9.6 6.2 Q11.5 8.5 13.5 8.8" fill="none" stroke="#d83a30" stroke-width="0.6"/></svg><div class="txt" style="top:4px">Edema of entire limb (finding)</div></div>
<div class="row rg" style="top:604px;height:30px"><div class="cell"></div><svg style="left:8px;top:8.0px" width="14" height="14" viewBox="0 0 14 14"><path d="M7 0.4 V13.6 M1 7 H13" stroke="#36433a" stroke-width="1.75"/></svg><svg style="left:38px;top:6.0px" width="18" height="18" viewBox="0 0 18 18"><path d="M5.2 5.2 Q3.2 6.5 3.2 9.5 Q3.3 13.5 6.8 15 L8.5 15 L8.8 6 Q7 5 5.2 5.2Z" fill="#2196f3"/><path d="M2.6 2.3 L4.9 4.6 L6.8 2.2 M4.9 4.6 L5.1 5.8" fill="none" stroke="#1565c0" stroke-width="1.5" stroke-linecap="round"/><path d="M8.8 5.2 Q10 4.3 11.6 4.4 Q14.5 4.6 15.9 7 Q17 9 16.8 12 Q16.6 15.8 12.5 16.3 Q9.3 16.4 8 14.4 Q6.7 12.4 6.8 9.8 Q6.9 6.6 8.8 5.2Z" fill="#f44336"/><path d="M11.1 2.1 L13.2 4.6 M16.6 2.4 L13.6 5 L15 6.4" fill="none" stroke="#c62828" stroke-width="1.6" stroke-linecap="round" stroke-linejoin="round"/><path d="M9.6 6.2 Q11.5 8.5 13.5 8.8" fill="none" stroke="#d83a30" stroke-width="0.6"/></svg><div class="txt" style="top:4px">Edema of foot (finding)</div></div>
</div>
  <div class="a" style="left:466px;top:42px;width:8px;height:607px;background:#fff"></div>
  <div class="a" style="left:466px;top:107px;width:7.5px;height:73px;background:#cfd3da;border-radius:4px"></div>
</div>

<!-- RIGHT CARD -->
<div class="card" style="left:583px;top:176px;width:973px;height:649px;overflow:hidden">
  <div class="cnt" style="left:866px">3</div><svg style="left:879.5px;top:14.5px" width="11" height="11" viewBox="0 0 11 11"><path d="M1 5.5 H10 M6 1.5 L10 5.5 L6 9.5" class="arr"/></svg><div class="cnt" style="left:896.5px">5</div><div class="cnt" style="left:912px;color:#23882b">+3</div><div class="cnt" style="left:931.5px;color:#b0241c">-1</div>
  <div class="a" style="left:0;top:40px;width:973px;height:2px;background:#e8eaee"></div>
  <div class="a" id="rrows" style="left:0;top:42px;width:973px;height:300px">
<div class="a" style="left:0;top:0px;width:973px;height:46px;background:#e4fdea"><div class="a" style="left:0;top:0;width:48px;height:46px;background:#cbfcd5"></div><svg style="left:17px;top:16px" width="14" height="14" viewBox="0 0 14 14"><path d="M7 0.4 V13.6 M1 7 H13" stroke="#36433a" stroke-width="1.75"/></svg><div class="txt" style="left:64.5px;top:12px;font-size:14.55px">&lt;&lt;271808008<span style="margin:0 1.9px">|</span>Generalized edema (finding)<span style="margin:0 1.9px">|</span></div></div>
<div class="a" style="left:0;top:46px;width:973px;height:46px;background:#e4fdea"><div class="a" style="left:0;top:0;width:48px;height:46px;background:#cbfcd5"></div><svg style="left:17px;top:16px" width="14" height="14" viewBox="0 0 14 14"><path d="M7 0.4 V13.6 M1 7 H13" stroke="#36433a" stroke-width="1.75"/></svg><div class="txt" style="left:64.5px;top:12px;font-size:14.55px">&lt;&lt;274724004<span style="margin:0 1.9px">|</span>Localized edema (finding)<span style="margin:0 1.9px">|</span></div></div>
<div class="a" style="left:0;top:92px;width:973px;height:46px;background:#e4fdea"><div class="a" style="left:0;top:0;width:48px;height:46px;background:#cbfcd5"></div><svg style="left:17px;top:16px" width="14" height="14" viewBox="0 0 14 14"><path d="M7 0.4 V13.6 M1 7 H13" stroke="#36433a" stroke-width="1.75"/></svg><div class="txt" style="left:64.5px;top:12px;font-size:14.55px">&lt;&lt;424372002<span style="margin:0 1.9px">|</span>Edema of extremity (finding)<span style="margin:0 1.9px">|</span></div></div>
<div class="a" style="left:0;top:138px;width:973px;height:46px;background:#ffe9e9"><div class="a" style="left:0;top:0;width:48px;height:46px;background:#ffd8d8"></div><svg style="left:17px;top:21px" width="14" height="4" viewBox="0 0 14 4"><path d="M1 2 H13" stroke="#4a4040" stroke-width="1.8" stroke-linecap="round"/></svg><div class="txt" style="left:64.5px;top:12px;font-size:14.55px">&lt;&lt;79654002<span style="margin:0 1.9px">|</span>Edema (morphologic abnormality)<span style="margin:0 1.9px">|</span></div></div>
<div class="txt" style="left:0;width:973px;text-align:center;top:197px;font-size:14.35px">There are 2 unchanged inclusions</div>
</div>
  <div class="a" style="left:0;top:273px;width:973px;height:1px;background:#eceef0"></div>
</div>

</body></html>
